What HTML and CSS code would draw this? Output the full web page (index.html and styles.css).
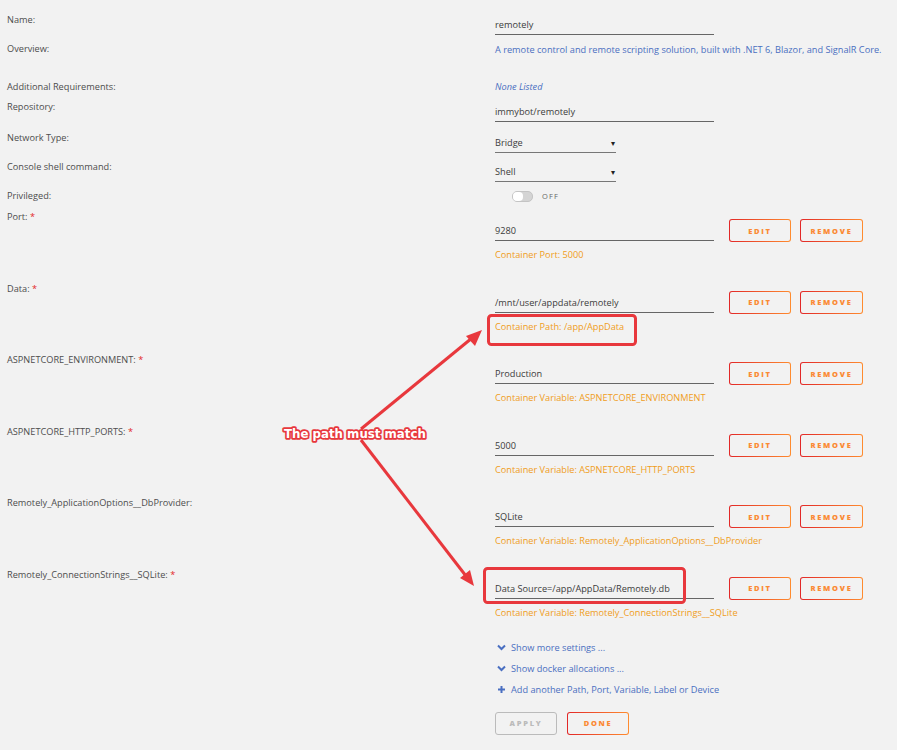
FILE: index.html
```html
<!DOCTYPE html>
<html lang="en">
<head>
    <meta charset="UTF-8">
    <title>Update Container</title>
    <link rel="stylesheet" href="styles.css">
</head>
<body>
    <div class="page">
        <form class="template">
            <div class="row r-name">
                <div class="label">Name:</div>
                <div class="field"><div class="input">remotely</div></div>
            </div>
            <div class="row r-overview">
                <div class="label">Overview:</div>
                <div class="field"><div class="text blue">A remote control and remote scripting solution, built with .NET 6, Blazor, and SignalR Core.</div></div>
            </div>
            <div class="row r-req">
                <div class="label">Additional Requirements:</div>
                <div class="field"><div class="text blue italic">None Listed</div></div>
            </div>
            <div class="row r-repo">
                <div class="label">Repository:</div>
                <div class="field"><div class="input">immybot/remotely</div></div>
            </div>
            <div class="row r-net">
                <div class="label">Network Type:</div>
                <div class="field"><div class="input select">Bridge<span class="caret">&#9662;</span></div></div>
            </div>
            <div class="row r-shell">
                <div class="label">Console shell command:</div>
                <div class="field"><div class="input select">Shell<span class="caret">&#9662;</span></div></div>
            </div>
            <div class="row r-priv">
                <div class="label">Privileged:</div>
                <div class="field">
                    <div class="switch"><span class="track"><span class="knob"></span></span><span class="switch-text">OFF</span></div>
                </div>
            </div>

            <div class="row var">
                <div class="label">Port: <span class="req">*</span></div>
                <div class="field">
                    <div class="line">
                        <div class="input wide">9280</div>
                        <button type="button" class="btn edit">EDIT</button>
                        <button type="button" class="btn remove">REMOVE</button>
                    </div>
                    <div class="desc">Container Port: 5000</div>
                </div>
            </div>
            <div class="row var">
                <div class="label">Data: <span class="req">*</span></div>
                <div class="field">
                    <div class="line">
                        <div class="input wide">/mnt/user/appdata/remotely</div>
                        <button type="button" class="btn edit">EDIT</button>
                        <button type="button" class="btn remove">REMOVE</button>
                    </div>
                    <div class="desc">Container Path: /app/AppData</div>
                </div>
            </div>
            <div class="row var">
                <div class="label">ASPNETCORE_ENVIRONMENT: <span class="req">*</span></div>
                <div class="field">
                    <div class="line">
                        <div class="input wide">Production</div>
                        <button type="button" class="btn edit">EDIT</button>
                        <button type="button" class="btn remove">REMOVE</button>
                    </div>
                    <div class="desc">Container Variable: ASPNETCORE_ENVIRONMENT</div>
                </div>
            </div>
            <div class="row var">
                <div class="label">ASPNETCORE_HTTP_PORTS: <span class="req">*</span></div>
                <div class="field">
                    <div class="line">
                        <div class="input wide">5000</div>
                        <button type="button" class="btn edit">EDIT</button>
                        <button type="button" class="btn remove">REMOVE</button>
                    </div>
                    <div class="desc">Container Variable: ASPNETCORE_HTTP_PORTS</div>
                </div>
            </div>
            <div class="row var">
                <div class="label">Remotely_ApplicationOptions__DbProvider:</div>
                <div class="field">
                    <div class="line">
                        <div class="input wide">SQLite</div>
                        <button type="button" class="btn edit">EDIT</button>
                        <button type="button" class="btn remove">REMOVE</button>
                    </div>
                    <div class="desc">Container Variable: Remotely_ApplicationOptions__DbProvider</div>
                </div>
            </div>
            <div class="row var">
                <div class="label">Remotely_ConnectionStrings__SQLite: <span class="req">*</span></div>
                <div class="field">
                    <div class="line">
                        <div class="input wide">Data Source=/app/AppData/Remotely.db</div>
                        <button type="button" class="btn edit">EDIT</button>
                        <button type="button" class="btn remove">REMOVE</button>
                    </div>
                    <div class="desc">Container Variable: Remotely_ConnectionStrings__SQLite</div>
                </div>
            </div>

            <div class="row r-links">
                <div class="label"></div>
                <div class="field links">
                    <a class="link"><svg width="9" height="7" viewBox="0 0 9 7"><path d="M1 1.5 L4.5 5 L8 1.5" fill="none" stroke="#4a6fc1" stroke-width="2"/></svg>Show more settings ...</a>
                    <a class="link"><svg width="9" height="7" viewBox="0 0 9 7"><path d="M1 1.5 L4.5 5 L8 1.5" fill="none" stroke="#4a6fc1" stroke-width="2"/></svg>Show docker allocations ...</a>
                    <a class="link"><svg width="9" height="9" viewBox="0 0 9 9"><path d="M4.5 1 V8 M1 4.5 H8" fill="none" stroke="#4a6fc1" stroke-width="2"/></svg>Add another Path, Port, Variable, Label or Device</a>
                </div>
            </div>
            <div class="row r-actions">
                <div class="label"></div>
                <div class="field actions">
                    <button type="button" class="btn apply">APPLY</button>
                    <button type="button" class="btn done">DONE</button>
                </div>
            </div>
        </form>

        <!-- screenshot annotation -->
        <svg class="annotation" width="897" height="750" viewBox="0 0 897 750">
            <rect x="488.5" y="315.5" width="147" height="29" rx="3" fill="none" stroke="#e8383d" stroke-width="3"/>
            <rect x="484.5" y="568.5" width="200" height="34" rx="3" fill="none" stroke="#e8383d" stroke-width="3"/>
            <path d="M361 429 L472 338" stroke="#e8383d" stroke-width="3" fill="none"/>
            <path d="M482 330 L466 336 L475 346 Z" fill="#e8383d"/>
            <path d="M361 440 L466 576" stroke="#e8383d" stroke-width="3" fill="none"/>
            <path d="M474 586 L470 570 L460 578 Z" fill="#e8383d"/>
            <text x="284" y="438" class="note">The path must match</text>
        </svg>
    </div>
</body>
</html>
```

FILE: styles.css
```css
body {
    margin: 0;
    background: #f2f2f2;
    font-family: 'Open Sans', 'Noto Sans', sans-serif;
    font-size: 9.2px;
    color: #4d4d4d;
}

.page {
    position: relative;
    width: 897px;
    height: 750px;
    overflow: hidden;
}

.template {
    padding-top: 14px;
}

.row {
    display: grid;
    grid-template-columns: 495px 1fr;
    align-items: start;
}

.label {
    padding-left: 7px;
    line-height: 12px;
}

.req {
    color: #e22828;
}

.field {
    line-height: 12px;
}

/* row heights follow the original form spacing */
.r-name { height: 29px; }
.r-overview { height: 38px; }
.r-req { height: 20px; }
.r-repo { height: 31px; }
.r-net { height: 29px; }
.r-shell { height: 29px; }
.r-priv { height: 21px; }
.var { height: 71.6px; }

.r-name .field,
.r-repo .field,
.r-net .field,
.r-shell .field {
    padding-top: 5px;
}

.r-overview .field { padding-top: 1px; }

.input {
    width: 219px;
    box-sizing: border-box;
    padding-bottom: 3px;
    border-bottom: 1px solid #666;
    color: #3c3c3c;
    white-space: nowrap;
}

.select {
    width: 121px;
    display: flex;
    justify-content: space-between;
    border-bottom-color: #777;
}

.caret {
    font-size: 8px;
    color: #222;
    padding-right: 1px;
}

.text.blue {
    color: #4a6fc1;
    white-space: nowrap;
}

.italic {
    font-style: italic;
}

.switch {
    display: flex;
    align-items: center;
    gap: 9px;
    padding-left: 17px;
}

.track {
    display: inline-block;
    width: 19px;
    height: 9px;
    border-radius: 5px;
    background: #d4d4d4;
    border: 1px solid #c4c4c4;
    position: relative;
}

.knob {
    position: absolute;
    left: 0;
    top: 0;
    width: 10px;
    height: 9px;
    border-radius: 4px;
    background: #fff;
}

.switch-text {
    font-size: 7.5px;
    letter-spacing: 1.2px;
    color: #666;
}

.var .field {
    padding-top: 8px;
}

.line {
    display: flex;
    align-items: flex-start;
}

.line .input {
    margin-top: 6px;
    margin-right: 15px;
}

.btn {
    height: 23px;
    padding: 0;
    font-family: 'Open Sans', 'Noto Sans', sans-serif;
    font-size: 7.5px;
    font-weight: 800;
    letter-spacing: 1.7px;
    color: #fb8a35;
    border: 1.5px solid transparent;
    border-radius: 3px;
    background: linear-gradient(#f2f2f2, #f2f2f2) padding-box,
                linear-gradient(90deg, #e22828, #ff8c2f) border-box;
    cursor: pointer;
}

.edit { width: 62px; margin-right: 9px; }
.remove { width: 63px; }

.desc {
    margin-top: 7px;
    color: #f09d1c;
}

.r-links .field {
    padding-top: 1px;
    display: flex;
    flex-direction: column;
    gap: 9px;
}

.link {
    display: flex;
    align-items: center;
    gap: 5px;
    padding-left: 2px;
    color: #4a6fc1;
}

.r-actions .field {
    padding-top: 16px;
    display: flex;
    gap: 10px;
}

.apply {
    width: 62px;
    color: #bbb;
    background: #f2f2f2;
    border-color: #bbb;
}

.done {
    width: 62px;
}

.annotation {
    position: absolute;
    left: 0;
    top: 0;
    pointer-events: none;
}

.note {
    font-family: 'DejaVu Sans', sans-serif;
    font-weight: bold;
    font-size: 11.8px;
    fill: #fff;
    stroke: #e8383d;
    stroke-width: 3.5px;
    stroke-linejoin: round;
    paint-order: stroke;
}
```
